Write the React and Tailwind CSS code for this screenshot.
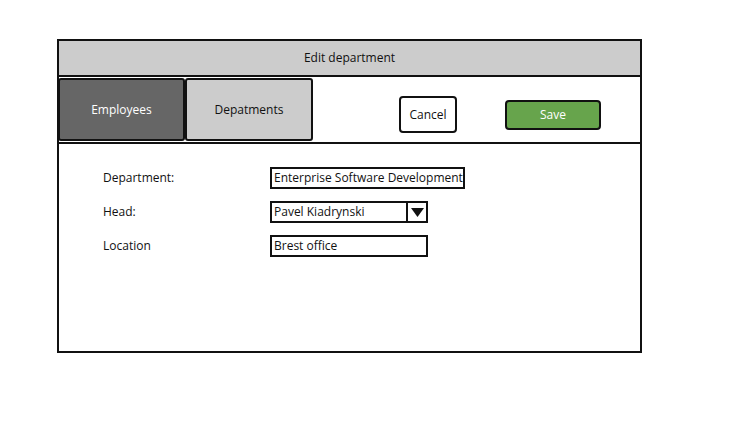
export default function App() {
  const font = { fontFamily: '"Open Sans", "Noto Sans", sans-serif' };
  return (
    <div className="w-[751px] h-[443px] bg-white overflow-hidden" style={font}>
      <div className="ml-[57px] mt-[39px] w-[585px] h-[314px] border-2 border-[#111] flex flex-col">
        {/* Title */}
        <div className="h-[36px] shrink-0 bg-[#cccccc] border-b-2 border-[#111] flex items-center justify-center text-[12px] text-[#111]">
          Edit department
        </div>
        {/* Tabs row */}
        <div className="h-[67px] shrink-0 border-b-2 border-[#111] flex items-start">
          <div className="mt-[1px] -ml-[1px] w-[127px] h-[63px] rounded-[3px] border-2 border-[#111] bg-[#666666] text-white text-[12px] flex items-center justify-center">
            Employees
          </div>
          <div className="mt-[1px] w-[128px] h-[63px] rounded-[3px] border-2 border-[#111] bg-[#cccccc] text-[#111] text-[12px] flex items-center justify-center">
            Depatments
          </div>
          <div className="mt-[19px] ml-[86px] w-[58px] h-[37px] rounded-[4px] border-2 border-[#111] bg-white text-[#111] text-[12px] flex items-center justify-center">
            Cancel
          </div>
          <div className="mt-[23px] ml-[48px] w-[96px] h-[30px] rounded-[4px] border-2 border-[#111] bg-[#67a44c] text-white text-[12px] flex items-center justify-center">
            Save
          </div>
        </div>
        {/* Form */}
        <div className="flex-1 pt-[23px] pl-[44px]">
          <div className="grid grid-cols-[167px_auto] gap-y-[12px] items-center text-[12px] text-[#111]">
            <div>Department:</div>
            <div className="w-[195px] h-[22px] border-2 border-[#111] flex items-center pl-[2px] whitespace-nowrap overflow-hidden">
              Enterprise Software Development
            </div>
            <div>Head:</div>
            <div className="w-[158px] h-[22px] border-2 border-[#111] flex items-center">
              <div className="flex-1 pl-[2px] whitespace-nowrap">Pavel Kiadrynski</div>
              <div className="w-[20px] h-full border-l-2 border-[#111] flex items-center justify-center">
                <svg width="13" height="9" viewBox="0 0 13 9">
                  <polygon points="0,0 13,0 6.5,9" fill="#111" />
                </svg>
              </div>
            </div>
            <div>Location</div>
            <div className="w-[158px] h-[22px] border-2 border-[#111] flex items-center pl-[2px] whitespace-nowrap">
              Brest office
            </div>
          </div>
        </div>
      </div>
    </div>
  );
}
